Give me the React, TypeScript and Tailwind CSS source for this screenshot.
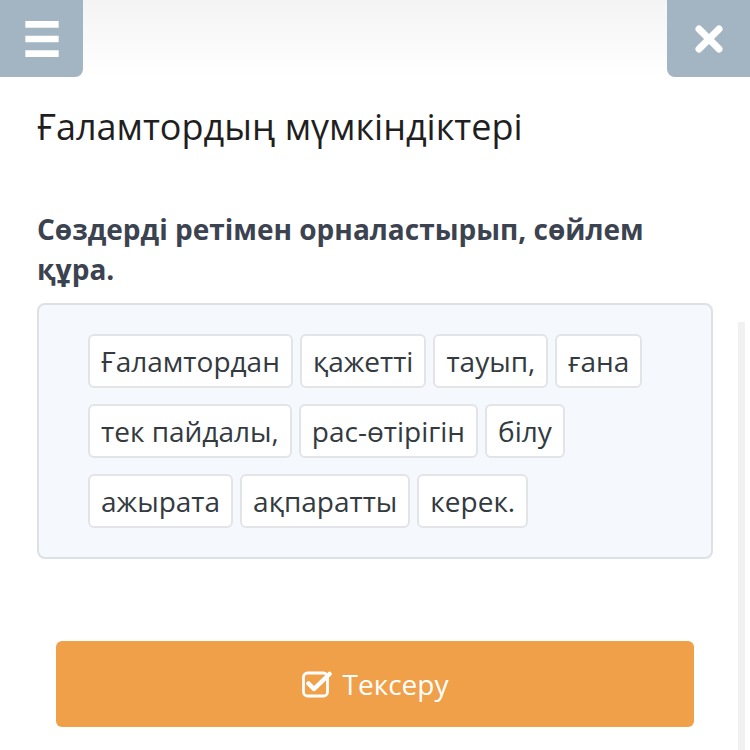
import { Menu } from 'lucide-react'

const rows = [
  ['Ғаламтордан', 'қажетті', 'тауып,', 'ғана'],
  ['тек пайдалы,', 'рас-өтірігін', 'білу'],
  ['ажырата', 'ақпаратты', 'керек.'],
]

function CheckSquare() {
  return (
    <svg width="30" height="27" viewBox="0 0 30 27" fill="none">
      <rect x="1.5" y="2" width="24" height="23" rx="4" stroke="white" strokeWidth="2.8" />
      <path d="M6.5 12.5 L12 18 L27.5 3" stroke="white" strokeWidth="4.5" strokeLinecap="round" strokeLinejoin="round" />
    </svg>
  )
}

export default function App() {
  return (
    <div className="relative w-[750px] h-[750px] bg-white overflow-hidden" style={{ fontFamily: "'Open Sans', sans-serif" }}>
      <div className="flex justify-between h-[78px] bg-gradient-to-b from-[#f4f4f4] to-white">
        <button className="w-[83px] h-[77px] bg-[#a3b4c3] rounded-br-lg flex items-center justify-center">
          <Menu size={50} color="white" strokeWidth={3.2} strokeLinecap="butt" />
        </button>
        <button className="w-[83px] h-[77px] bg-[#a3b4c3] rounded-bl-lg flex items-center justify-center">
          <svg width="32" height="32" viewBox="0 0 32 32">
            <path d="M6 6 L26 26 M26 6 L6 26" stroke="white" strokeWidth="7" strokeLinecap="round" />
          </svg>
        </button>
      </div>

      <div className="px-[37px]">
        <h1 className="mt-[27px] text-[36px] leading-[44px] text-[#1f1f1f]">Ғаламтордың мүмкіндіктері</h1>
        <p className="mt-[60px] text-[28px] leading-[40px] font-bold text-[#3c4350]">
          Сөздерді ретімен орналастырып, сөйлем құра.
        </p>

        <div className="mt-[14px] w-[676px] border-2 border-[#dde1e6] bg-[#f5f8fd] rounded-lg pl-[49px] pr-[49px] py-[29px] flex flex-col gap-[16px]">
          {rows.map((row, i) => (
            <div key={i} className="flex gap-[7px]">
              {row.map((w) => (
                <span
                  key={w}
                  className="h-[54px] px-[11px] flex items-center bg-white border-2 border-[#e2e4e8] rounded-md text-[28px] text-[#333a40]"
                >
                  {w}
                </span>
              ))}
            </div>
          ))}
        </div>
      </div>

      <div className="px-[56px] mt-[82px]">
        <button className="w-full h-[86px] bg-[#f0a049] rounded-md flex items-center justify-center gap-[11px] text-white text-[28px]">
          <CheckSquare />
          <span>Тексеру</span>
        </button>
      </div>

      <div className="absolute right-[5px] top-[322px] bottom-0 w-[7px] bg-[#f1f1f1]" />
    </div>
  )
}
